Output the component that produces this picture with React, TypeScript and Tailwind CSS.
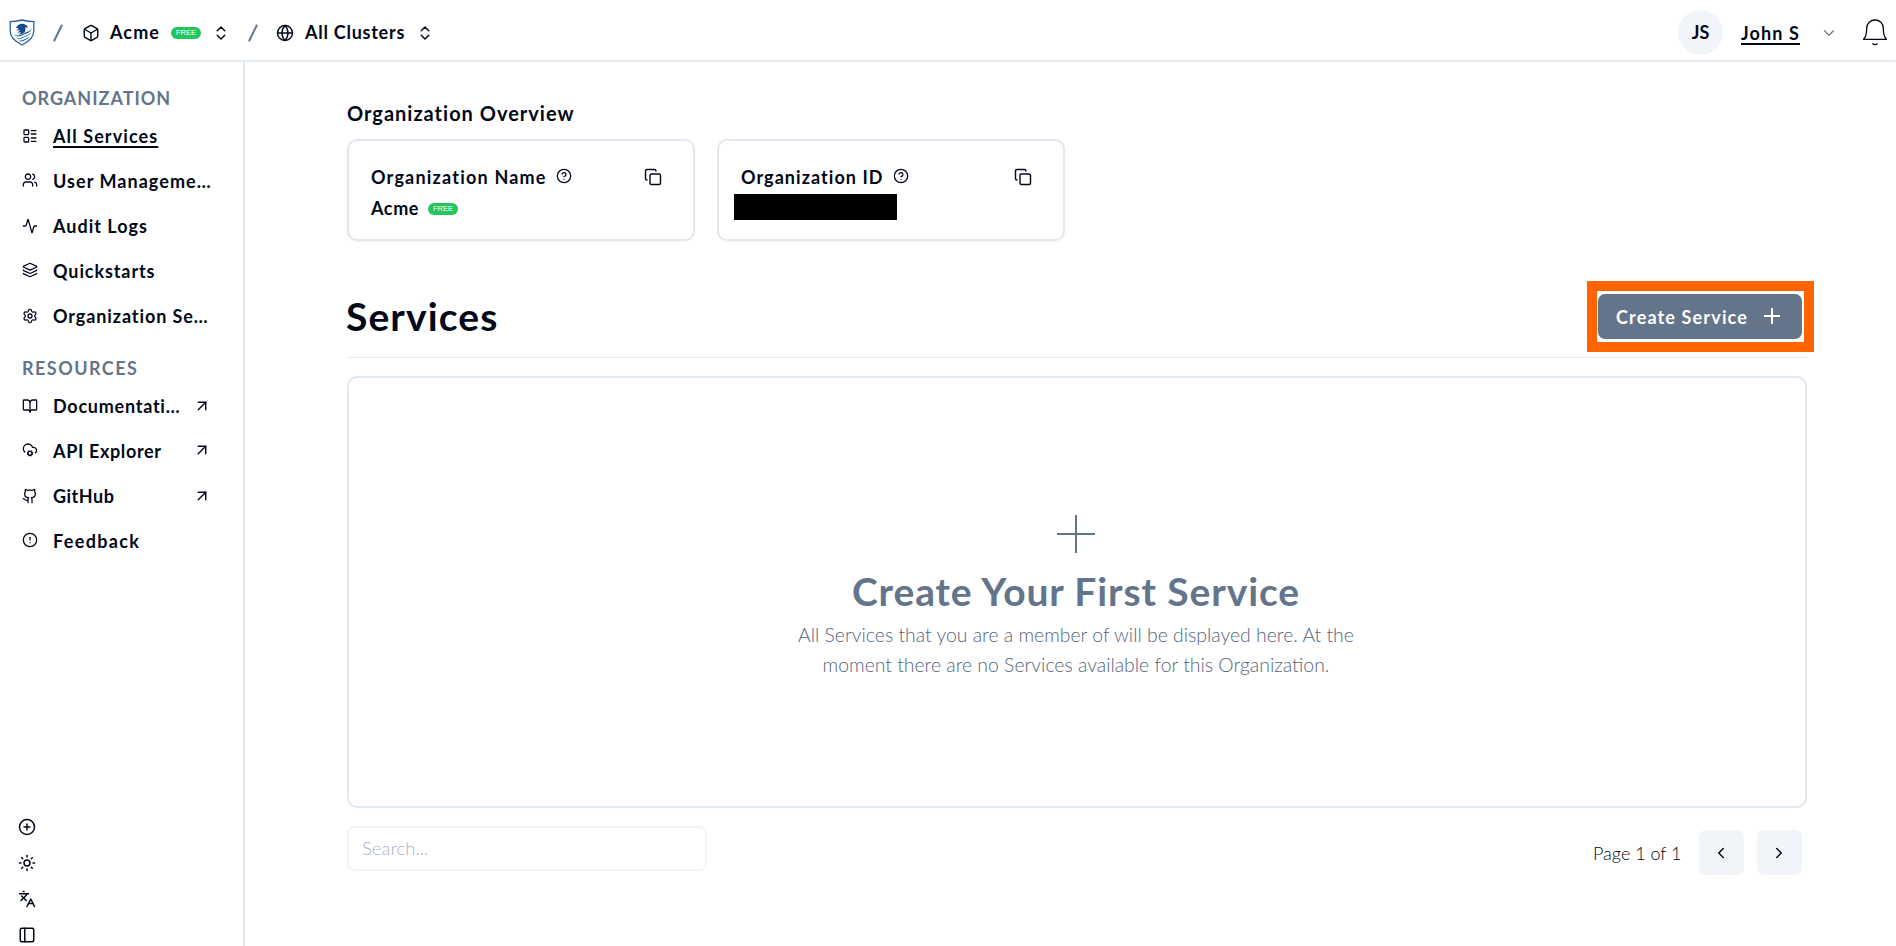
import type { ComponentType, ReactNode } from "react";
import {
  Activity, ArrowUpRight, BookOpen, Box, ChevronDown, ChevronLeft, ChevronRight, ChevronsUpDown,
  CircleAlert, CircleHelp, CirclePlus, CloudCog, Copy, Github, Globe, Languages, Layers,
  LayoutList, PanelLeft, Settings, Sun, Users,
} from "lucide-react";

type Icon = ComponentType<{ size?: number; strokeWidth?: number; className?: string }>;

type NavItem = { icon: Icon; label: string; tracking: string; active?: boolean; external?: boolean; lift?: boolean };

const organization: NavItem[] = [
  { icon: LayoutList, label: "All Services", tracking: "tracking-[1.1px]", active: true },
  { icon: Users, label: "User Manageme…", tracking: "tracking-[1.05px]", lift: true },
  { icon: Activity, label: "Audit Logs", tracking: "tracking-[1px]" },
  { icon: Layers, label: "Quickstarts", tracking: "tracking-[0.9px]", lift: true },
  { icon: Settings, label: "Organization Se…", tracking: "tracking-[0.9px]" },
];

const resources: NavItem[] = [
  { icon: BookOpen, label: "Documentati…", tracking: "tracking-[0.75px]", external: true },
  { icon: CloudCog, label: "API Explorer", tracking: "tracking-[0.65px]", external: true, lift: true },
  { icon: Github, label: "GitHub", tracking: "tracking-[0.5px]", external: true },
  { icon: CircleAlert, label: "Feedback", tracking: "tracking-[1.35px]", lift: true },
];

function Logo() {
  return (
    <svg width="26" height="27" viewBox="0 0 26 27" fill="none" className="shrink-0">
      <path d="M1.200 2.600C5 2.600 9 2 13 1c4 1 8 1.600 11.800 1.600V12c0 6.500-4.800 10.500-11.800 14C6 22.500 1.200 18.500 1.200 12z" stroke="#2561a5" strokeWidth="1.300" />
      <path d="M7 9c1.500-3.500 4.800-4.800 8-4l2.800 1.600L19 9l-2.800-.7.300 3.200c-.5 2.500-3.500 3.500-6.500 4.300l2.200-3-3.700 1.500 2.500-3.300-3.500.8 2.300-2.600z" fill="#174a8b" />
      <path d="M23 9.500c-2 3-5 3-8.500 5-2.800 1.600-6 2.800-9.800 1.300 3.500 3 7.500 1.200 10.500-.3C18.500 14 21.500 13.500 23 9.500zM22.300 13.500c-2 2.600-4.800 2.600-7.800 4.300-2.300 1.300-5 1.800-8 .8 3.200 2.400 6.500.9 8.800-.3 2.700-1.400 5.500-1.500 7-4.800zM20.700 17.500c-2 1.800-3.700 1.900-5.700 3-1.700.9-3.400 1.400-5.500 1 2.500 1.700 4.500.6 6.200-.3 1.700-.9 3.800-1.300 5-3.700z" fill="#2561a5" />
    </svg>
  );
}

function Slash() {
  return (
    <svg width="10" height="18" viewBox="0 0 10 18" className="shrink-0">
      <path d="M1 17.300 9 .7" stroke="#64748b" strokeWidth="2" />
    </svg>
  );
}

function Plus({ size, weight }: { size: number; weight: number }) {
  return (
    <svg width={size} height={size} viewBox={`0 0 ${size} ${size}`} stroke="currentColor" strokeWidth={weight} className="shrink-0">
      <path d={`M${size / 2} 0V${size}M0 ${size / 2}H${size}`} />
    </svg>
  );
}

function FreeBadge() {
  return (
    <span className="flex h-3 w-[30px] shrink-0 justify-center rounded-full bg-[#22c55e] font-['Liberation_Sans',sans-serif] text-[7.5px] leading-[11px] font-normal text-white">
      FREE
    </span>
  );
}

function NavSection({ title, items, className }: { title: string; items: NavItem[]; className: string }) {
  return (
    <section>
      <h2 className={`flex h-[31px] items-center pb-px pl-[22px] text-[18px] leading-none font-bold text-[#64748b] ${className}`}>{title}</h2>
      <ul>
        {items.map(({ icon: ItemIcon, label, tracking, active, external, lift }) => (
          <li key={label} className="flex h-[45px] items-center pr-[32px] pl-[22px]">
            <ItemIcon size={16} strokeWidth={1.9} className={lift ? "mb-[3px] shrink-0" : "mb-px shrink-0"} />
            <span className={`mb-[2px] ml-[15px] text-[18px] leading-none font-bold whitespace-nowrap ${tracking} ${active ? "underline decoration-2 underline-offset-[3px]" : ""}`}>{label}</span>
            {external && <ArrowUpRight size={18} strokeWidth={1.9} className={lift ? "mb-[3px] ml-auto shrink-0" : "mb-px ml-auto shrink-0"} />}
          </li>
        ))}
      </ul>
    </section>
  );
}

function InfoCard({ title, className, children }: { title: string; className: string; children: ReactNode }) {
  return (
    <div className="h-[102px] w-[348px] rounded-[10px] border-2 border-[#e2e8f0] pt-[19px] pr-[31px] pl-[22px] shadow-[0_1px_2px_rgba(0,0,0,0.04)]">
      <div className="flex h-[34px] items-center">
        <h3 className={`mb-px text-[18px] leading-none font-bold whitespace-nowrap ${className}`}>{title}</h3>
        <CircleHelp size={16} strokeWidth={1.900} className="mb-[3px] ml-[9px]" />
        <Copy size={18} strokeWidth={1.900} className="mb-px ml-auto" />
      </div>
      {children}
    </div>
  );
}

export default function App() {
  return (
    <div className="flex h-[946px] w-full flex-col overflow-hidden bg-white font-['Lato',sans-serif] text-[#020817]">
      <header className="flex h-[62px] shrink-0 items-center border-b-2 border-[#e2e8f0] pt-[5px] pl-[9px] text-[18px] leading-none font-bold">
        <Logo />
        <span className="ml-[18px] flex"><Slash /></span>
        <Box size={18} strokeWidth={1.900} className="ml-[19px]" />
        <span className="mb-px ml-[10px] w-[61px] tracking-[1.1px]">Acme</span>
        <FreeBadge />
        <ChevronsUpDown size={18} strokeWidth={1.900} className="ml-[11px]" />
        <span className="ml-[18px] flex"><Slash /></span>
        <Globe size={18} strokeWidth={1.900} className="ml-[18px]" />
        <span className="mb-px ml-[11px] w-[111px] tracking-[0.75px] whitespace-nowrap">All Clusters</span>
        <ChevronsUpDown size={18} strokeWidth={1.900} />
        <span className="ml-auto flex size-[45px] items-center justify-center rounded-full bg-[#f1f5f9] pb-px">JS</span>
        <span className="ml-[18px] w-[79px] whitespace-nowrap"><span className="mb-px tracking-[1.100px] underline decoration-2 underline-offset-[3px]">John S</span></span>
        <ChevronDown size={18} strokeWidth={1.500} className="text-[#71717a]" />
        <svg width="24" height="27" viewBox="0 0 24 27" fill="none" stroke="currentColor" strokeWidth="1.300" className="mr-[9px] ml-[25px]">
          <path d="M.5 20.300h23c-3-2.500-3.200-6-3.200-11C20.300 4 16.500 1 12 1S3.700 4 3.700 9.300c0 5-.2 8.500-3.200 11z" strokeLinejoin="round" />
          <path d="M9.500 24.500c1.400 1.400 3.600 1.400 5 0" strokeWidth="1.500" />
        </svg>
      </header>

      <div className="flex min-h-0 flex-1">
        <aside className="flex w-[245px] shrink-0 flex-col border-r-2 border-[#e2e8f0] pt-[21px]">
          <NavSection title="ORGANIZATION" items={organization} className="tracking-[1px]" />
          <div className="h-[14px]" />
          <NavSection title="RESOURCES" items={resources} className="tracking-[1.45px]" />
          <div className="mt-auto mb-[2px] flex flex-col gap-[18px] pl-[18px]">
            {[CirclePlus, Sun, Languages, PanelLeft].map((ToolIcon, i) => (
              <ToolIcon key={i} size={18} strokeWidth={2} />
            ))}
          </div>
        </aside>

        <main className="flex flex-1 flex-col pr-[89px] pl-[102px]">
          <h2 className="mt-[36px] flex h-[30px] items-center pb-px text-[20px] leading-none font-bold tracking-[1px]">Organization Overview</h2>
          <div className="mt-[11px] flex gap-[22px]">
            <InfoCard title="Organization Name" className="tracking-[1.2px]">
              <div className="flex h-[30px] items-center">
                <span className="mb-[2px] w-[57px] text-[18px] leading-none font-bold tracking-[0.6px]">Acme</span>
                <FreeBadge />
              </div>
            </InfoCard>
            <InfoCard title="Organization ID" className="tracking-[1.050px]">
              <div className="-ml-[7px] h-[26px] w-[163px] bg-black" />
            </InfoCard>
          </div>

          <div className="mt-[41px] flex h-[76px] justify-between border-b border-[#e2e8f0] pt-[12px] pr-[5px]">
            <h1 className="-ml-px flex h-[45px] items-center text-[39px] leading-none font-bold tracking-[1.100px]">Services</h1>
            <div className="relative h-[45px]">
              <button className="flex h-[45px] w-[204px] items-center rounded-[7px] bg-[#64748b] pl-[18px] text-[18px] leading-none font-bold whitespace-nowrap text-white">
                <span className="w-[148px] text-left tracking-[1.150px]">Create Service</span>
                <span className="mb-[2px]"><Plus size={16} weight={2} /></span>
              </button>
              <div className="absolute -top-[13px] -left-[11px] h-[71px] w-[227px] border-[10px] border-[#ff6400]" />
            </div>
          </div>

          <section className="mt-[18px] flex h-[432px] shrink-0 flex-col items-center rounded-[10px] border-2 border-[#e2e8f0] pt-[137px] pr-[2px] text-center text-[#64748b]">
            <Plus size={38} weight={2} />
            <h2 className="mt-[16px] flex h-[44px] items-center text-[39px] leading-none font-bold tracking-[0.900px] whitespace-nowrap">Create Your First Service</h2>
            <p className="mt-[7px] text-[19.4px] leading-[30px] font-light whitespace-nowrap text-[#55657d]">
              <span className="block">All Services that you are a member of will be displayed here. At the</span>
              <span className="block">moment there are no Services available for this Organization.</span>
            </p>
          </section>

          <div className="mt-[18px] flex justify-between pr-[5px]">
            <input placeholder="Search..." className="h-[45px] w-[360px] rounded-[7px] border-2 border-[#f1f5f9] px-[13px] pb-[2px] text-[18.5px] font-light outline-none placeholder:text-[#a9b1c1]" />
            <div className="mt-[4px] flex h-[45px] items-center text-[18px] leading-none font-light">
              <span className="w-[106px] whitespace-nowrap">Page 1 of 1</span>
              <button className="flex size-[45px] items-center justify-center rounded-[7px] bg-[#f1f5f9] pr-[2px]"><ChevronLeft size={18} /></button>
              <button className="ml-[13px] flex size-[45px] items-center justify-center rounded-[7px] bg-[#f1f5f9] pr-[2px]"><ChevronRight size={18} /></button>
            </div>
          </div>
        </main>
      </div>
    </div>
  );
}
